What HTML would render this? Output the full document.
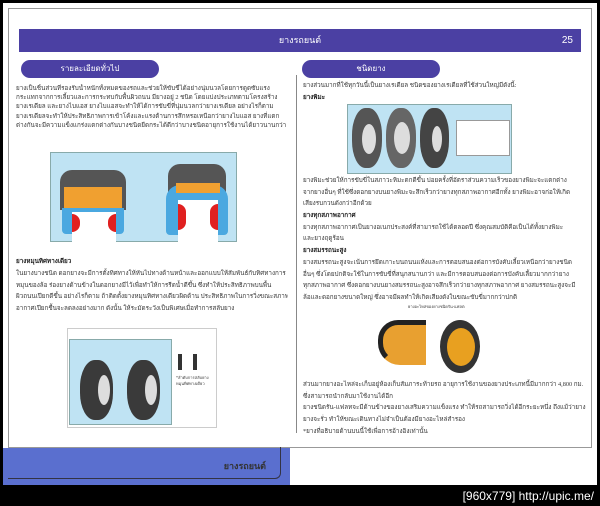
<!DOCTYPE html>
<html><head><meta charset="utf-8"><style>
*{margin:0;padding:0;box-sizing:border-box}
body{width:600px;height:506px;background:#000;position:relative;overflow:hidden;font-family:"Liberation Serif","Noto Sans CJK SC",serif}
.page{position:absolute;left:3px;top:3px;width:594px;height:482px;background:#fff}
.frame{position:absolute;left:8px;top:8px;width:584px;height:440px;border:1px solid #999}
.hdr{position:absolute;left:19px;top:29px;width:562px;height:23px;background:#4b40a3;color:#fff;font-size:9px;text-align:center;line-height:23px}
.hdr span{position:absolute;right:8px;top:0;font-family:"Liberation Sans",sans-serif;font-size:10px}
.pill{position:absolute;top:60px;height:18px;background:#4b40a3;border-radius:9px;color:#fff;font-size:8px;text-align:center;line-height:18px}
.div{position:absolute;left:296px;top:75px;width:1px;height:358px;background:#888}
.t{position:absolute;font-size:6.3px;color:#3a3a3a;white-space:nowrap;overflow:hidden}
.t div{height:11.7px;line-height:11.7px}
.b{font-weight:bold;color:#222}
.img{position:absolute;background:#bfe3f3;border:1px solid #8aa}
.tire{position:absolute;background:#3a3a3a;border-radius:45%}
.hub{position:absolute;background:#ddd;border-radius:50%}
.bot{position:absolute;left:3px;top:448px;width:287px;height:37px;background:#5a6fcf;color:#333;font-size:9px;font-weight:bold;text-align:right;padding-right:24px;line-height:37px}
.bot div{position:absolute;left:5px;top:-1px;right:9px;bottom:6px;border:1px solid #334;border-top:none;border-left:none;border-radius:0 0 6px 0}
.wm{position:absolute;right:6px;bottom:3px;color:#fff;font-family:"Liberation Sans",sans-serif;font-size:12px}
</style></head><body>
<div class="page"></div>
<div class="frame"></div>
<div class="hdr">ยางรถยนต์<span>25</span></div>
<div class="pill" style="left:21px;width:138px">รายละเอียดทั่วไป</div>
<div class="pill" style="left:302px;width:138px">ชนิดยาง</div>
<div class="div"></div>

<div class="t" style="left:16px;top:84px;width:272px">
<div style="height:9.2px;line-height:9.2px">ยางเป็นชิ้นส่วนที่รองรับน้ำหนักทั้งหมดของรถและช่วยให้ขับขี่ได้อย่างนุ่มนวลโดยการดูดซับแรง</div>
<div style="height:9.2px;line-height:9.2px">กระแทกจากการเลี้ยวและการกระทบกับพื้นผิวถนน มียางอยู่ 2 ชนิด โดยแบ่งประเภทตามโครงสร้าง</div>
<div style="height:9.2px;line-height:9.2px">ยางเรเดียล และยางไบแอส ยางไบแอสจะทำให้ได้การขับขี่ที่นุ่มนวลกว่ายางเรเดียล อย่างไรก็ตาม</div>
<div style="height:9.2px;line-height:9.2px">ยางเรเดียลจะทำให้ประสิทธิภาพการเข้าโค้งและแรงต้านการสึกหรอเหนือกว่ายางไบแอส ยางที่แตก</div>
<div style="height:9.2px;line-height:9.2px">ต่างกันจะมีความแข็งแกร่งแตกต่างกันบางชนิดยืดกระได้ดีกว่าบางชนิดอายุการใช้งานได้ยาวนานกว่า</div>
</div>

<div class="img" style="left:50px;top:152px;width:187px;height:90px"></div>
<div style="position:absolute;left:60px;top:170px;width:66px;height:40px;background:#555;border-radius:12px 12px 0 0"></div>
<div style="position:absolute;left:64px;top:187px;width:58px;height:22px;background:#f0a030"></div>
<div style="position:absolute;left:62px;top:208px;width:62px;height:26px;background:#4aa8e0;border-radius:0 0 4px 4px"></div>
<div style="position:absolute;left:72px;top:212px;width:44px;height:30px;background:#fff"></div>
<div style="position:absolute;left:72px;top:214px;width:8px;height:18px;background:#e02020;border-radius:0 8px 8px 0"></div>
<div style="position:absolute;left:108px;top:214px;width:8px;height:18px;background:#e02020;border-radius:8px 0 0 8px"></div>
<div style="position:absolute;left:168px;top:164px;width:58px;height:28px;background:#555;border-radius:12px 12px 0 0"></div>
<div style="position:absolute;left:166px;top:185px;width:62px;height:50px;background:#4aa8e0;border-radius:14px 14px 4px 4px"></div>
<div style="position:absolute;left:176px;top:183px;width:44px;height:10px;background:#f0a030"></div>
<div style="position:absolute;left:178px;top:200px;width:40px;height:42px;background:#fff"></div>
<div style="position:absolute;left:178px;top:204px;width:8px;height:26px;background:#e02020;border-radius:0 8px 8px 0"></div>
<div style="position:absolute;left:210px;top:204px;width:8px;height:26px;background:#e02020;border-radius:8px 0 0 8px"></div>

<div class="t b" style="left:16px;top:256px;width:272px"><div>ยางหมุนทิศทางเดียว</div></div>
<div class="t" style="left:16px;top:268px;width:272px">
<div>ในยางบางชนิด ดอกยางจะมีการตั้งทิศทางให้หันไปทางด้านหน้าและออกแบบให้สัมพันธ์กับทิศทางการ</div>
<div>หมุนของล้อ ร่องยางด้านข้างในดอกยางมีไว้เพื่อทำให้การรีดน้ำดีขึ้น ซึ่งทำให้ประสิทธิภาพบนพื้น</div>
<div>ผิวถนนเปียกดีขึ้น อย่างไรก็ตาม ถ้าติดตั้งยางหมุนทิศทางเดียวผิดด้าน ประสิทธิภาพในการวิ่งขณะสภาพ</div>
<div>อากาศเปียกชื้นจะลดลงอย่างมาก ดังนั้น ให้ระมัดระวังเป็นพิเศษเมื่อทำการสลับยาง</div>
</div>

<div style="position:absolute;left:67px;top:328px;width:150px;height:100px;border:1px solid #ccc"></div>
<div class="img" style="left:69px;top:339px;width:103px;height:86px"></div>
<div class="tire" style="left:80px;top:360px;width:33px;height:60px"></div>
<div class="hub" style="left:98px;top:375px;width:12px;height:30px"></div>
<div class="tire" style="left:127px;top:360px;width:33px;height:60px"></div>
<div class="hub" style="left:145px;top:375px;width:12px;height:30px"></div>
<div style="position:absolute;left:178px;top:354px;width:4px;height:16px;background:#333"></div>
<div style="position:absolute;left:193px;top:354px;width:4px;height:16px;background:#333"></div>
<div class="t" style="left:176px;top:375px;width:40px;font-size:4px;line-height:6px;white-space:normal">*ลำดับการสลับยางหมุนทิศทางเดียว</div>

<div class="t" style="left:303px;top:80px;width:285px">
<div>ยางส่วนมากที่ใช้ทุกวันนี้เป็นยางเรเดียล ชนิดของยางเรเดียลที่ใช้ส่วนใหญ่มีดังนี้:</div>
<div class="b">ยางพิมะ</div>
</div>
<div class="img" style="left:347px;top:104px;width:165px;height:70px"></div>
<div class="tire" style="left:352px;top:108px;width:30px;height:60px;background:#555"></div>
<div class="hub" style="left:362px;top:124px;width:14px;height:30px"></div>
<div class="tire" style="left:386px;top:108px;width:30px;height:60px;background:#666"></div>
<div class="hub" style="left:394px;top:122px;width:16px;height:32px"></div>
<div class="tire" style="left:420px;top:108px;width:29px;height:60px;background:#444"></div>
<div class="hub" style="left:432px;top:126px;width:10px;height:26px"></div>
<div style="position:absolute;left:456px;top:120px;width:54px;height:36px;background:#fff;border:1px solid #999"></div>
<div class="t" style="left:303px;top:175px;width:285px">
<div>ยางพิมะช่วยให้การขับขี่ในสภาวะหิมะตกดีขึ้น บ่อยครั้งที่อัตราส่วนความเร็วของยางพิมะจะแตกต่าง</div>
<div>จากยางอื่นๆ ที่ใช้ซึ่งดอกยางบนยางพิมะจะสึกเร็วกว่ายางทุกสภาพอากาศอีกทั้ง ยางพิมะอาจก่อให้เกิด</div>
<div>เสียงรบกวนดังกว่าอีกด้วย</div>
<div class="b">ยางทุกสภาพอากาศ</div>
<div>ยางทุกสภาพอากาศเป็นยางอเนกประสงค์ที่สามารถใช้ได้ตลอดปี ซึ่งคุณสมบัติคือเป็นได้ทั้งยางพิมะ</div>
<div>และยางฤดูร้อน</div>
<div class="b">ยางสมรรถนะสูง</div>
<div>ยางสมรรถนะสูงจะเน้นการยึดเกาะบนถนนแห้งและการตอบสนองต่อการบังคับเลี้ยวเหนือกว่ายางชนิด</div>
<div>อื่นๆ ซึ่งโดยปกติจะใช้ในการขับขี่ที่สนุกสนานกว่า และมีการตอบสนองต่อการบังคับเลี้ยวมากกว่ายาง</div>
<div>ทุกสภาพอากาศ ซึ่งดอกยางบนยางสมรรถนะสูงอาจสึกเร็วกว่ายางทุกสภาพอากาศ ยางสมรรถนะสูงจะมี</div>
<div>ล้อและดอกยางขนาดใหญ่ ซึ่งอาจมีผลทำให้เกิดเสียงดังในขณะขับขี่มากกว่าปกติ</div>
</div>
<div class="t" style="left:408px;top:303px;font-size:4px">ยางอะไหล่ของยางชนิดรัน-แฟลต</div>
<div style="position:absolute;left:378px;top:320px;width:48px;height:45px;border:5px solid #222;border-right:none;border-bottom-color:transparent;border-radius:20px 0 0 22px;background:#e8a030"></div>
<div style="position:absolute;left:440px;top:320px;width:40px;height:53px;background:#333;border-radius:50%"></div>
<div style="position:absolute;left:447px;top:328px;width:28px;height:38px;background:#e8a020;border-radius:50%"></div>
<div class="t" style="left:303px;top:379px;width:285px">
<div>ส่วนมากยางอะไหล่จะเก็บอยู่ห้องเก็บสัมภาระท้ายรถ อายุการใช้งานของยางประเภทนี้มีมากกว่า 4,800 กม.</div>
<div>ซึ่งสามารถนำกลับมาใช้งานได้อีก</div>
<div>ยางชนิดรัน-แฟลทจะมีด้านข้างของยางเสริมความแข็งแรง ทำให้รถสามารถวิ่งได้อีกระยะหนึ่ง ถึงแม้ว่ายาง</div>
<div>ยางจะรั่ว ทำให้ขณะเดินทางไม่จำเป็นต้องมียางอะไหล่สำรอง</div>
<div>*ยางที่อธิบายด้านบนนี้ใช้เพื่อการอ้างอิงเท่านั้น</div>
</div>
<div class="bot"><div></div>ยางรถยนต์</div>
<div class="wm">[960x779] http://upic.me/</div>
</body></html>
